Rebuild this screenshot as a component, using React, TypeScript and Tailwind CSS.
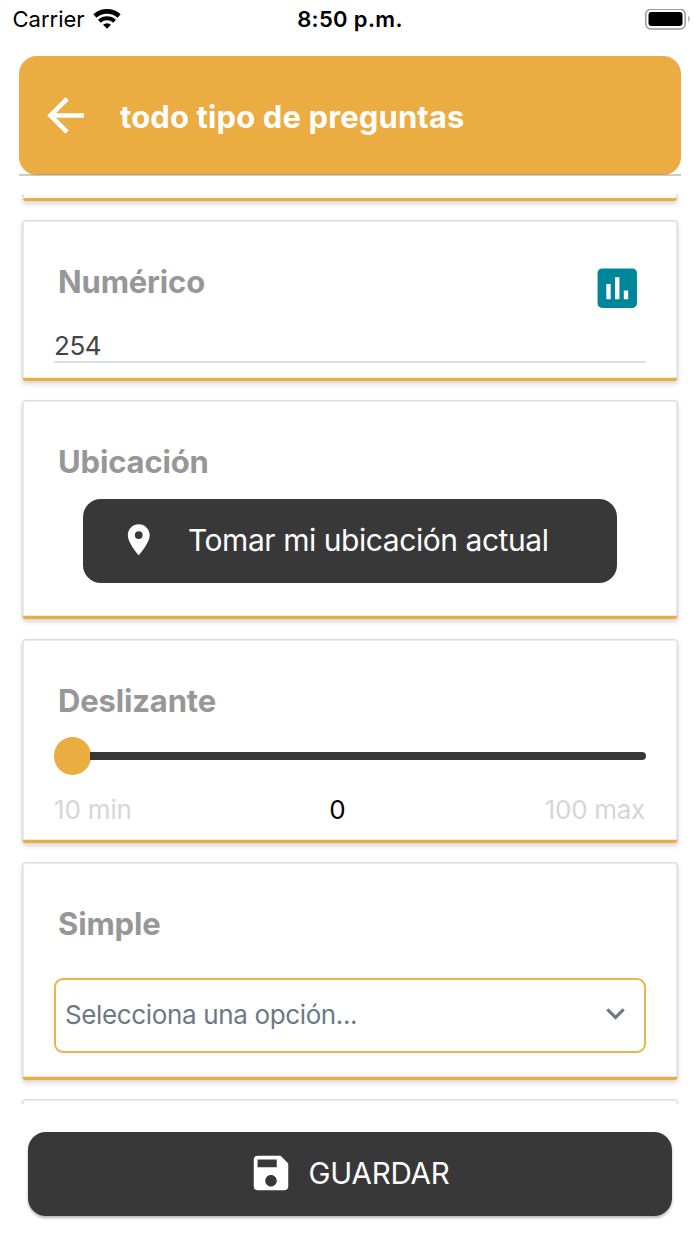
import type { ReactNode } from "react";
import {
  MdArrowBack,
  MdAssessment,
  MdKeyboardArrowDown,
  MdLocationOn,
  MdSave,
} from "react-icons/md";

function StatusBar() {
  return (
    <div className="grid h-[39px] shrink-0 grid-cols-3 items-center text-[22px] leading-[39px] text-black">
      <div className="flex items-center gap-[8px] pl-[12.5px]">
        <span>Carrier</span>
        <svg width="28" height="21" viewBox="0 0 28 21" fill="none">
          <path d="M1.9 7a18 18 0 0 1 24.2 0" stroke="#000" strokeWidth="4.6" />
          <path d="M6.4 12.2a11.4 11.4 0 0 1 15.2 0" stroke="#000" strokeWidth="4.1" />
          <path d="M14 19.8l-4-4a5.8 5.8 0 0 1 8 0z" fill="#000" />
        </svg>
      </div>
      <span className="text-center font-semibold tracking-[0.35px]">8:50 p.m.</span>
      <div className="flex justify-end">
        <svg width="56" height="22" viewBox="0 0 56 22" fill="none">
          <rect x="1.8" y="0.3" width="39.4" height="19.6" rx="5" stroke="#9a9a9a" strokeWidth="1.5" />
          <rect x="4.5" y="3" width="34" height="14" rx="3" fill="#000" />
          <path d="M44.3 6.7c1.8 1.2 1.8 5.2 0 6.4z" fill="#9a9a9a" />
        </svg>
      </div>
    </div>
  );
}

function Header() {
  return (
    <header className="mx-[19px] mt-[17px] h-[119px] shrink-0">
      <div className="flex h-[119px] items-center rounded-[18px] bg-[#ebac41] pl-[19px]">
        <MdArrowBack className="mb-px size-[55px] text-white" />
        <h1 className="ml-[27px] pt-[3px] text-[31px] font-bold tracking-[0.12px] text-white">todo tipo de preguntas</h1>
      </div>
      <div className="-mt-px h-[2px] bg-[#8c8c8c]/45" />
    </header>
  );
}

function Card({ title, className, icon, children }: { title: string; className: string; icon?: ReactNode; children?: ReactNode }) {
  return (
    <section
      className={`shrink-0 rounded-[4px] border border-b-[3px] border-[#dcdcdc] border-b-[#ebac41] bg-white px-[31px] shadow-[inset_0_0_0_1px_#ececec,0_3px_5px_rgba(0,0,0,0.16)] ${className}`}
    >
      <div className="flex h-[81px] items-start justify-between pt-[41px] pr-[3px] pl-[4px]">
        <h2 className="text-[31px] leading-[40px] font-bold tracking-[-0.15px] text-[#979797]">{title}</h2>
        {icon}
      </div>
      {children}
    </section>
  );
}

export default function App() {
  return (
    <div className="flex h-[1244px] w-[700px] flex-col overflow-hidden bg-white font-[Inter,sans-serif]">
      <StatusBar />
      <Header />
      <main className="mt-[19px] flex h-[910px] shrink-0 flex-col justify-start gap-[19px] overflow-hidden px-[22px]">
        <div className="h-[7px] shrink-0 rounded-b-[4px] border-x-2 border-b-[3px] border-[#e1e1e1] border-b-[#ebac41] shadow-[0_3px_5px_rgba(0,0,0,0.16)]" />

        <Card
          title="Numérico"
          className="h-[161px]"
          icon={<MdAssessment className="size-[52.5px] shrink-0 text-[#00869b]" />}
        >
          <div className="mt-[26px] h-[35px] border-b-2 border-[#dedede] text-[26px] leading-[36px] tracking-[-0.4px] text-[#444]">254</div>
        </Card>

        <Card title="Ubicación" className="h-[219px]">
          <button className="mt-[17px] ml-[29px] flex h-[84px] w-[534px] items-center rounded-[18px] bg-[#383838] pb-[2px] pl-[37px] text-white">
            <MdLocationOn className="size-[37.5px]" />
            <span className="ml-[30.5px] text-[30px] tracking-[-0.45px]">Tomar mi ubicación actual</span>
          </button>
        </Card>

        <Card title="Deslizante" className="mt-px h-[204px]">
          <div className="mt-[16px] flex h-[38px] items-center">
            <div className="-ml-[0.5px] size-[37.5px] rounded-full bg-[#ebac41]" />
            <div className="-ml-px h-[8px] flex-1 rounded-r-full bg-[#383838]" />
          </div>
          <div className="mt-[19px] grid grid-cols-3 text-[26px] leading-[32px] text-[#d6d6d6]">
            <span className="tracking-[-0.15px]">10 min</span>
            <span className="pr-[25px] text-center text-black">0</span>
            <span className="pr-[1px] text-right tracking-[-0.3px]">100 max</span>
          </div>
        </Card>

        <Card title="Simple" className="h-[218px]">
          <div className="mt-[34px] flex h-[75px] items-center justify-between rounded-[9px] border-2 border-[#edb14d] pr-[10px] pb-[2px] pl-[9px] text-[#6c7883]">
            <span className="text-[26px] tracking-[-0.36px]">Selecciona una opción...</span>
            <MdKeyboardArrowDown className="mb-[3px] size-[37px]" />
          </div>
        </Card>

        <Card title="" className="h-[218px]" />
      </main>
      <button className="mt-[28px] ml-[28px] flex h-[84px] w-[644px] shrink-0 items-center justify-center rounded-[18px] bg-[#383838] pb-[2px] text-white shadow-[0_2px_3px_rgba(0,0,0,0.3)]">
        <MdSave className="size-[46px]" />
        <span className="mr-[3px] ml-[15px] text-[29.5px] tracking-[-0.2px]">GUARDAR</span>
      </button>
    </div>
  );
}
